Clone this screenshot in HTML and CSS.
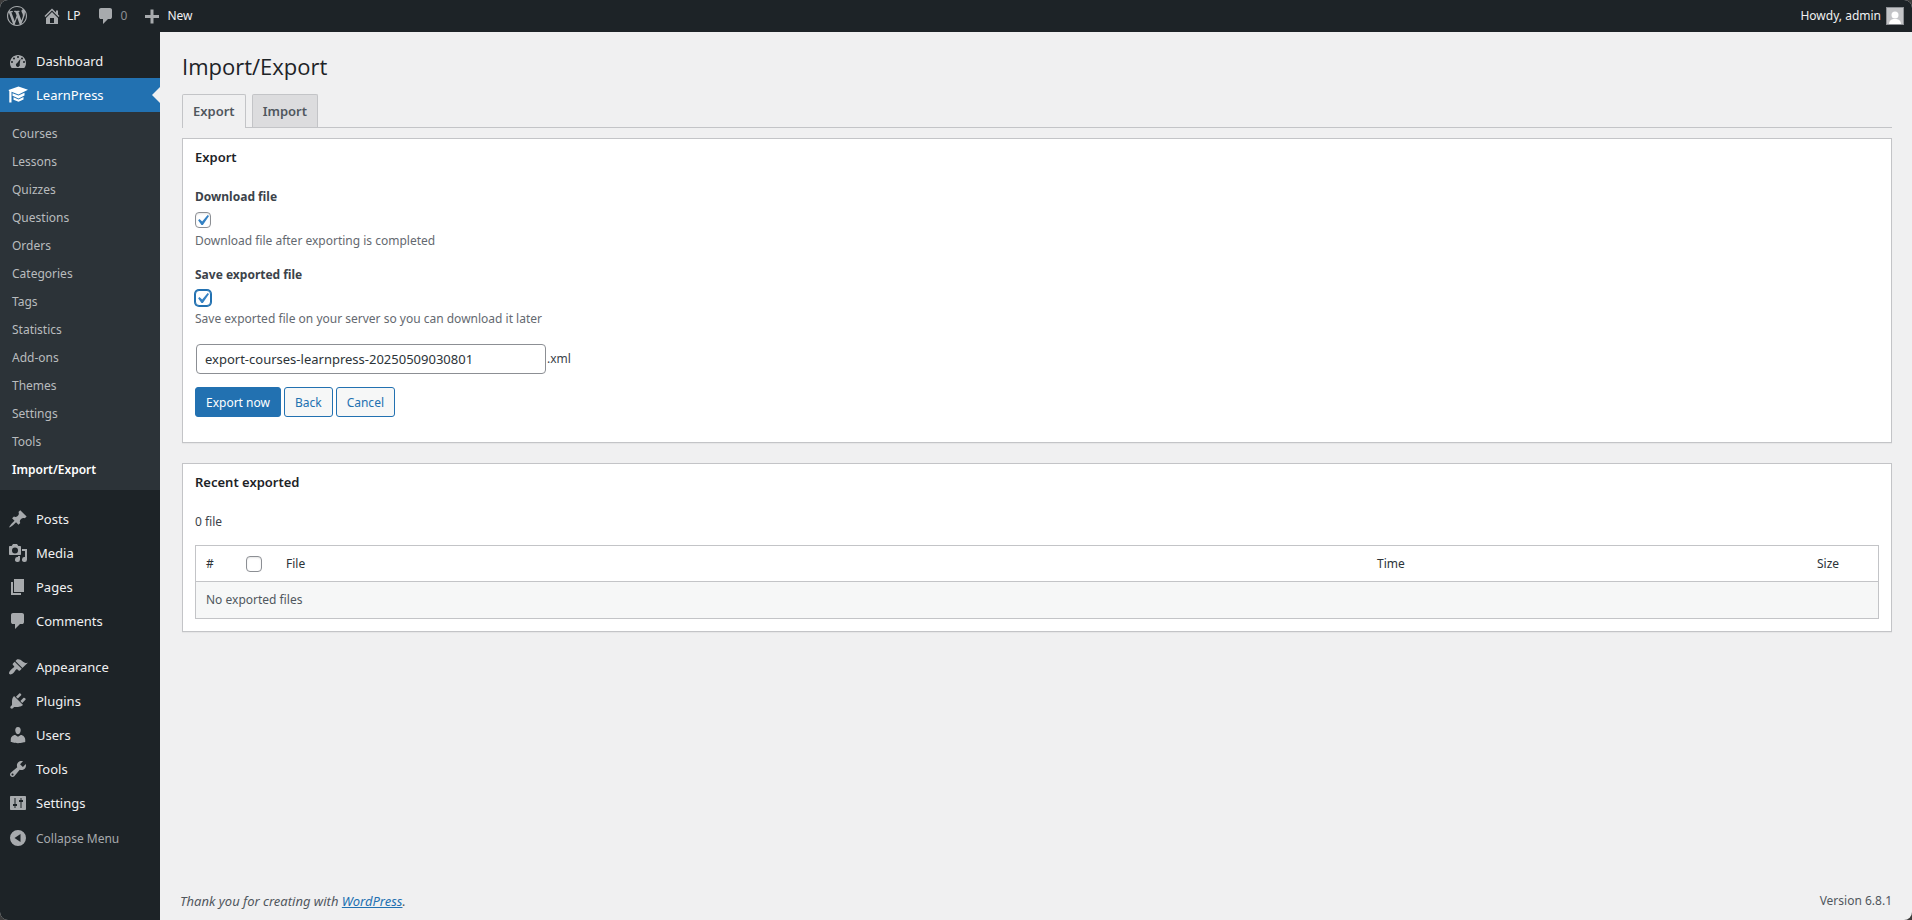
FILE: index.html
```html
<!DOCTYPE html>
<html lang="en">

<head>
    <meta charset="UTF-8">
    <meta name="viewport" content="width=device-width, initial-scale=1.0">
    <title>Import/Export</title>
    <link rel="stylesheet" href="styles.css">
</head>

<body>
    <!-- top bar -->
    <header class="adminbar">
        <a href="#" class="bar-item bar-logo" aria-label="About WordPress">
            <svg class="icon" viewBox="0 0 20 20"><path d="M20 10c0-5.51-4.49-10-10-10C4.48 0 0 4.49 0 10c0 5.52 4.48 10 10 10 5.51 0 10-4.48 10-10zM7.78 15.37L4.37 6.22c.55-.02 1.17-.08 1.17-.08.5-.06.44-1.13-.06-1.11 0 0-1.45.11-2.37.11-.18 0-.37 0-.58-.01C4.12 2.69 6.87 1.11 10 1.11c2.33 0 4.45.87 6.05 2.34-.68-.11-1.65.39-1.65 1.58 0 .74.45 1.36.9 2.1.35.61.55 1.36.55 2.46 0 1.49-1.4 5-1.4 5l-3.03-8.37c.54-.02.82-.17.82-.17.5-.05.44-1.25-.06-1.22 0 0-1.44.12-2.38.12-.87 0-2.33-.12-2.33-.12-.5-.03-.56 1.2-.06 1.22l.92.08 1.26 3.41zM17.41 10c.24-.64.74-1.87.43-4.25.7 1.29 1.05 2.71 1.05 4.25 0 3.29-1.73 6.24-4.4 7.78.97-2.59 1.94-5.2 2.92-7.78zM6.1 18.09C3.12 16.65 1.11 13.53 1.11 10c0-1.3.23-2.48.72-3.59C3.25 10.3 4.67 14.2 6.1 18.09zm4.03-6.63l2.58 6.98c-.86.29-1.76.45-2.71.45-.79 0-1.57-.11-2.29-.33.81-2.38 1.62-4.74 2.42-7.1z"/></svg>
        </a>
        <a href="#" class="bar-item">
            <svg class="icon" viewBox="0 0 20 20"><path d="M16 8.5l1.53 1.53-1.06 1.06L10 4.6l-6.47 6.49-1.06-1.06L10 2.5l4 4v-2h2v4zm-6-2.46l6 5.99V18H4v-5.97zM12 17v-5H8v5h4z"/></svg>LP
        </a>
        <a href="#" class="bar-item bar-comments">
            <svg class="icon" viewBox="0 0 20 20"><path d="M5 2h9q.82 0 1.41.59T16 4v7q0 .82-.59 1.41T14 13h-2l-5 5v-5H5q-.82 0-1.41-.59T3 11V4q0-.82.59-1.41T5 2z"/></svg>0
        </a>
        <a href="#" class="bar-item">
            <svg class="icon" viewBox="0 0 20 20"><path d="M17 9v3h-5.500v5.500h-3V12H3V9h5.500V3.500h3V9z"/></svg>New
        </a>
        <a href="#" class="bar-item bar-account">Howdy, admin
            <svg class="avatar" viewBox="0 0 18 18"><path fill="#8c8f94" d="M0 0h18v18H0z"/><path fill="#c3c4c7" d="M1 1h16v16H1z"/><circle cx="9" cy="8" r="3.500" fill="#fff"/><path fill="#fff" d="M3 17c0-3 2-4.500 4.500-5h3c2.500.5 4.500 2 4.500 5z"/></svg>
        </a>
    </header>

    <div class="wrapper">
        <!-- left menu -->
        <nav class="sidebar">
            <ul class="menu">
                <li><a href="#" class="menu-link"><svg class="icon" viewBox="0 0 20 20"><path fill-rule="evenodd" d="M3.760 17h12.480c1.100-1.370 1.760-3.110 1.760-5 0-4.420-3.580-8-8-8s-8 3.580-8 8c0 1.890.66 3.630 1.760 5zM10 5a1 1 0 1 1 0 2 1 1 0 0 1 0-2zM6 6.500a1 1 0 1 1 0 2 1 1 0 0 1 0-2zm8 0a1 1 0 1 1 0 2 1 1 0 0 1 0-2zM12.500 7.800l-.8 5.300a2 2 0 1 1-2.500-1.100zM4 10a1 1 0 1 1 0 2 1 1 0 0 1 0-2zm12 0a1 1 0 1 1 0 2 1 1 0 0 1 0-2z"/></svg>Dashboard</a></li>
                <li><a href="#" class="menu-link current"><svg class="icon" viewBox="0 0 20 20"><path d="M10.500 1.500L20 4.800l-9.500 4.700-7-2.700v.7V17.500H1.300V6.300L.5 5zM4.500 8.200l6 2.300 6-2.800v2.800l-6 3-6-2.700zm1 4.100l5 2.200 5-2.500v2.500l-5 2.300-5-2z"/></svg>LearnPress</a>
                    <ul class="submenu">
                        <li><a href="#">Courses</a></li>
                        <li><a href="#">Lessons</a></li>
                        <li><a href="#">Quizzes</a></li>
                        <li><a href="#">Questions</a></li>
                        <li><a href="#">Orders</a></li>
                        <li><a href="#">Categories</a></li>
                        <li><a href="#">Tags</a></li>
                        <li><a href="#">Statistics</a></li>
                        <li><a href="#">Add-ons</a></li>
                        <li><a href="#">Themes</a></li>
                        <li><a href="#">Settings</a></li>
                        <li><a href="#">Tools</a></li>
                        <li><a href="#" class="active">Import/Export</a></li>
                    </ul>
                </li>
            </ul>
            <ul class="menu">
                <li><a href="#" class="menu-link"><svg class="icon" viewBox="0 0 20 20"><path d="M10.440 3.020l1.820-1.820 6.360 6.350-1.830 1.820c-1.050-.68-2.480-.57-3.410.36l-.75.75c-.92.93-1.040 2.350-.35 3.410l-1.830 1.820-2.410-2.410-2.800 2.790c-.42.42-3.380 2.710-3.800 2.290s1.860-3.390 2.280-3.810l2.790-2.790L4.100 9.360l1.830-1.820c1.050.69 2.480.57 3.400-.36l.75-.75c.93-.92 1.050-2.350.36-3.410z"/></svg>Posts</a></li>
                <li><a href="#" class="menu-link"><svg class="icon" viewBox="0 0 20 20"><path fill-rule="evenodd" d="M13 11V4c0-.55-.45-1-1-1h-1.670L9 1H5L3.670 3H2c-.55 0-1 .45-1 1v7c0 .55.450 1 1 1h10c.55 0 1-.45 1-1zM7 4.500a3 3 0 1 1 0 6 3 3 0 0 1 0-6zM14 6h5v10.500a2.500 2.500 0 1 1-2-2.450V8h-3zm-4 8.050V13h2v3.500a2.500 2.500 0 1 1-2-2.450z"/></svg>Media</a></li>
                <li><a href="#" class="menu-link"><svg class="icon" viewBox="0 0 20 20"><path d="M6 15V2h10v13H6zm-1 1h8v2H3V5h2v11z"/></svg>Pages</a></li>
                <li><a href="#" class="menu-link"><svg class="icon" viewBox="0 0 20 20"><path d="M5 2h9q.82 0 1.410.59T16 4v7q0 .82-.59 1.410T14 13h-2l-5 5v-5H5q-.82 0-1.410-.59T3 11V4q0-.82.59-1.410T5 2z"/></svg>Comments</a></li>
            </ul>
            <ul class="menu">
                <li><a href="#" class="menu-link"><svg class="icon" viewBox="0 0 20 20"><path d="M14.480 11.060L7.410 3.990l1.500-1.500c.5-.56 2.300-.47 3.510.32 1.210.8 1.430 1.280 2.910 2.100 1.180.64 2.450 1.260 4.450.85zm-.71.710L6.700 4.700 4.930 6.470c-.39.39-.39 1.020 0 1.410l1.060 1.060c.39.39.39 1.030 0 1.420-.6.600-1.430 1.110-2.210 1.690-.35.260-.7.530-1.010.84C1.430 14.230.4 16.080 1.400 17.070c.99 1 2.840-.03 4.180-1.360.31-.31.58-.66.85-1.020.57-.78 1.080-1.610 1.690-2.210.39-.39 1.020-.39 1.410 0l1.060 1.060c.39.39 1.020.39 1.410 0z"/></svg>Appearance</a></li>
                <li><a href="#" class="menu-link"><svg class="icon" viewBox="0 0 20 20"><path d="M13.110 4.360L9.870 7.600 8 5.730l3.240-3.240c.35-.34 1.050-.2 1.560.32.52.51.66 1.210.31 1.550zm-8 1.770l.91-1.120 9.010 9.010-1.190.84c-.71.710-2.630 1.160-3.820 1.160H6.140L4.900 17.260c-.59.590-1.540.59-2.120 0-.59-.58-.59-1.530 0-2.120l1.240-1.240v-3.880c0-1.130.4-3.190 1.090-3.890zm7.260 3.970l3.240-3.240c.34-.35 1.040-.21 1.550.31.520.51.660 1.210.31 1.550l-3.240 3.250z"/></svg>Plugins</a></li>
                <li><a href="#" class="menu-link"><svg class="icon" viewBox="0 0 20 20"><path d="M10 9.250c-2.270 0-2.730-3.440-2.730-3.440C7 4.020 7.820 2 9.970 2c2.160 0 2.980 2.020 2.710 3.810 0 0-.41 3.440-2.680 3.440zm0 2.570L12.720 10c2.390 0 4.520 2.330 4.520 4.530v2.490s-3.650 1.130-7.240 1.130c-3.650 0-7.240-1.130-7.240-1.130v-2.490c0-2.250 1.940-4.480 4.470-4.480z"/></svg>Users</a></li>
                <li><a href="#" class="menu-link"><svg class="icon" viewBox="0 0 20 20"><path d="M16.680 9.770c-1.340 1.340-3.300 1.670-4.950.99l-5.410 6.520c-.99.99-2.590.99-3.580 0s-.99-2.590 0-3.570l6.520-5.420c-.68-1.650-.35-3.610.99-4.950 1.280-1.280 3.120-1.620 4.720-1.060l-2.890 2.890 2.820 2.820 2.860-2.870c.53 1.580.18 3.390-1.080 4.650zM3.810 16.210c.4.390 1.040.39 1.430 0 .4-.4.400-1.040 0-1.430-.39-.4-1.030-.4-1.430 0-.39.390-.39 1.030 0 1.430z"/></svg>Tools</a></li>
                <li><a href="#" class="menu-link"><svg class="icon" viewBox="0 0 20 20"><path fill-rule="evenodd" d="M18 16V4c0-.55-.45-1-1-1H3c-.55 0-1 .45-1 1v12c0 .55.450 1 1 1h14c.55 0 1-.45 1-1zM6.500 5h1v6H9v2H7.500v2h-1v-2H5v-2h1.500zM12.500 15V9H11V7h1.500V5h1v2H15v2h-1.500v6z"/></svg>Settings</a></li>
            </ul>
            <button type="button" class="collapse"><svg class="icon" viewBox="0 0 20 20"><path fill-rule="evenodd" d="M10 2a8 8 0 1 1 0 16 8 8 0 0 1 0-16zm2.500 4L6.500 10l6 4z"/></svg>Collapse Menu</button>
        </nav>

        <!-- page content -->
        <div class="content">
            <main class="page">
                <h1 class="page-title">Import/Export</h1>
                <nav class="tabs">
                    <a href="#" class="tab tab-active">Export</a>
                    <a href="#" class="tab">Import</a>
                </nav>

                <form class="box box-export">
                    <h2 class="box-title">Export</h2>
                    <div class="field">
                        <label for="download" class="field-label">Download file</label>
                        <input type="checkbox" id="download" class="check" checked>
                        <p class="description">Download file after exporting is completed</p>
                    </div>
                    <div class="field">
                        <label for="save" class="field-label">Save exported file</label>
                        <input type="checkbox" id="save" class="check check-focus" checked>
                        <p class="description">Save exported file on your server so you can download it later</p>
                    </div>
                    <div class="filename">
                        <input type="text" id="filename" class="text-input" aria-label="File name" value="export-courses-learnpress-20250509030801">
                        <label for="filename">.xml</label>
                    </div>
                    <div class="buttons">
                        <button type="button" class="btn btn-primary">Export now</button>
                        <button type="button" class="btn">Back</button>
                        <button type="button" class="btn">Cancel</button>
                    </div>
                </form>

                <section class="box">
                    <h2 class="box-title">Recent exported</h2>
                    <p class="count">0 file</p>
                    <table class="files">
                        <thead>
                            <tr>
                                <th class="col-num">#</th>
                                <th class="col-check"><input type="checkbox" class="check" aria-label="Select all"></th>
                                <th>File</th>
                                <th class="col-time">Time</th>
                                <th class="col-size">Size</th>
                            </tr>
                        </thead>
                        <tbody>
                            <tr>
                                <td colspan="5">No exported files</td>
                            </tr>
                        </tbody>
                    </table>
                </section>
            </main>
            <footer class="footer">
                <p class="thanks">Thank you for creating with <a href="#">WordPress</a>.</p>
                <p>Version 6.8.1</p>
            </footer>
        </div>
    </div>
</body>

</html>
```
FILE: styles.css
```css
* {
    box-sizing: border-box;
    margin: 0;
    padding: 0;
}

html {
    background: #3c3c3c;
}

body {
    display: flex;
    flex-direction: column;
    min-height: 100vh;
    border-radius: 8px;
    overflow: hidden;
    background: #f0f0f1;
    color: #3c434a;
    font-family: "Noto Sans", "Open Sans", sans-serif;
    font-size: 12px;
    line-height: 18px;
}

ul {
    list-style: none;
}

a {
    color: #2271b1;
}

button,
input {
    font-family: inherit;
    font-size: inherit;
}

.icon {
    flex: none;
    width: 20px;
    height: 20px;
    fill: #a7aaad;
}

/* top bar */
.adminbar {
    display: flex;
    height: 32px;
    padding: 0 8px 0 7px;
    background: #1d2327;
}

.bar-item {
    display: flex;
    align-items: center;
    gap: 5px;
    margin-right: 15px;
    color: #f0f0f1;
    text-decoration: none;
}

.bar-comments {
    color: #8c8f94;
}

.bar-account {
    margin: 0 0 0 auto;
}

.avatar {
    width: 18px;
    height: 18px;
}

.wrapper {
    display: flex;
    flex: 1;
}

/* left menu */
.sidebar {
    flex: none;
    width: 160px;
    padding-top: 12px;
    background: #1d2327;
}

.menu {
    margin-bottom: 12px;
}

.menu:last-of-type {
    margin-bottom: 1px;
}

.menu-link,
.collapse {
    position: relative;
    display: flex;
    align-items: center;
    gap: 8px;
    width: 100%;
    height: 34px;
    padding-left: 8px;
    color: #f0f0f1;
    font-size: 13px;
    text-decoration: none;
}

.current {
    background: #2271b1;
    color: #fff;
}

.current .icon {
    fill: #fff;
}

/* arrow pointing at the page */
.current::after {
    content: "";
    position: absolute;
    top: 9px;
    right: 0;
    border: 8px solid transparent;
    border-left: 0;
    border-right-color: #f0f0f1;
}

.submenu {
    padding: 8px 0 6px;
    background: #2c3338;
}

.submenu a {
    display: block;
    padding: 5px 12px;
    color: #b9bcbe;
    text-decoration: none;
}

.submenu .active {
    color: #fff;
    font-weight: 600;
}

.collapse {
    border: 0;
    background: none;
    color: #a7aaad;
    font-size: 12px;
}

/* page content */
.content {
    display: flex;
    flex: 1;
    flex-direction: column;
    padding: 0 20px 0 22px;
}

.page {
    flex: 1;
    padding-top: 18px;
}

.page-title {
    color: #1d2327;
    font-family: "Open Sans", "Noto Sans", sans-serif;
    font-size: 22px;
    font-weight: 400;
    line-height: 32px;
}

.tabs {
    display: flex;
    gap: 6px;
    margin: 12px 0 10px;
    border-bottom: 1px solid #c3c4c7;
}

.tab {
    height: 33px;
    padding: 0 10px;
    border: 1px solid #c3c4c7;
    border-bottom: 0;
    border-radius: 2px 2px 0 0;
    background: #dcdcde;
    color: #50575e;
    font-size: 13px;
    font-weight: 600;
    line-height: 32px;
    text-decoration: none;
}

.tab-active {
    height: 34px;
    margin-bottom: -1px;
    background: #f0f0f1;
}

.box {
    margin-bottom: 20px;
    padding: 9px 12px 12px;
    border: 1px solid #c3c4c7;
    background: #fff;
    box-shadow: 0 1px 1px rgba(0, 0, 0, .04);
}

.box-export {
    padding-bottom: 25px;
}

.box-title {
    margin-bottom: 22px;
    color: #1d2327;
    font-size: 13px;
    font-weight: 600;
    line-height: 18px;
}

.field {
    margin-bottom: 16px;
}

.field-label {
    display: block;
    margin-bottom: 6px;
    font-weight: 700;
}

.check {
    appearance: none;
    display: block;
    width: 16px;
    height: 16px;
    border: 1px solid #8c8f94;
    border-radius: 4px;
    background: #fff;
    box-shadow: inset 0 1px 2px rgba(0, 0, 0, .1);
}

.check:checked::before {
    content: "";
    display: block;
    width: 14px;
    height: 14px;
    background: #3582c4;
    clip-path: polygon(83% 15%, 93% 22%, 49% 85%, 39% 85%, 15% 51%, 25% 42%, 44% 60%);
}

.check-focus {
    border-color: #2271b1;
    box-shadow: 0 0 0 1px #2271b1;
}

.description {
    margin-top: 4px;
    color: #646970;
}

.filename {
    display: flex;
    align-items: center;
    gap: 1px;
    padding-left: 1px;
}

.text-input {
    width: 350px;
    height: 30px;
    padding: 0 8px;
    border: 1px solid #8c8f94;
    border-radius: 4px;
    background: #fff;
    color: #2c3338;
    font-size: 13px;
}

.buttons {
    display: flex;
    gap: 3px;
    margin-top: 13px;
}

.btn {
    height: 30px;
    padding: 0 10px;
    border: 1px solid #2271b1;
    border-radius: 3px;
    background: #f6f7f7;
    color: #2271b1;
}

.btn-primary {
    background: #2271b1;
    color: #fff;
}

.count {
    margin-bottom: 14px;
}

.files {
    width: 100%;
    border: 1px solid #c3c4c7;
    border-spacing: 0;
    table-layout: fixed;
}

.files th,
.files td {
    height: 36px;
    padding: 0 10px;
    text-align: left;
}

.files th {
    border-bottom: 1px solid #c3c4c7;
    color: #2c3338;
    font-weight: 400;
}

.files td {
    background: #f6f7f7;
    color: #50575e;
}

.files .col-num {
    width: 40px;
}

.files .col-check {
    width: 40px;
}

.files .col-time {
    width: 440px;
}

.files .col-size {
    width: 71px;
}

.footer {
    display: flex;
    justify-content: space-between;
    padding: 10px 0;
    margin-left: -2px;
    color: #50575e;
}

.thanks {
    font-size: 13px;
    font-style: italic;
}
```
